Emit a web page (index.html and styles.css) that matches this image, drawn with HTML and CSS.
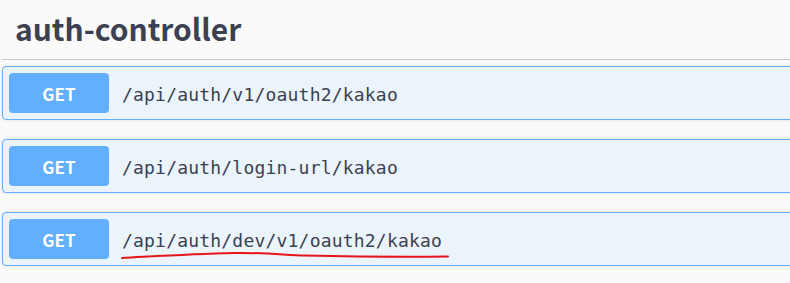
FILE: index.html
```html
<!DOCTYPE html>
<html lang="en">
<head>
    <meta charset="UTF-8">
    <title>Swagger UI</title>
    <link rel="stylesheet" href="styles.css">
</head>
<body>
    <div class="tag-section">
        <h3 class="opblock-tag">auth-controller</h3>

        <div class="opblock">
            <span class="method">GET</span>
            <span class="path">/api/auth/v1/oauth2/kakao</span>
        </div>

        <div class="opblock">
            <span class="method">GET</span>
            <span class="path">/api/auth/login-url/kakao</span>
        </div>

        <div class="opblock">
            <span class="method">GET</span>
            <span class="path">/api/auth/dev/v1/oauth2/kakao</span>
        </div>
    </div>

    <!-- hand-drawn red underline -->
    <svg class="scribble" width="790" height="283" viewBox="0 0 790 283">
        <path d="M122 258 C160 256 190 254 235 253 C265 252.5 285 255 305 255.5 C350 256.5 400 257 448 256.5"
              fill="none" stroke="#e8141b" stroke-width="2" stroke-linecap="round"/>
    </svg>
</body>
</html>
```

FILE: styles.css
```css
body {
    margin: 0;
    background-color: #fafafa;
    color: #3b4151;
    overflow: hidden;
    position: relative;
    height: 283px;
}

.tag-section {
    padding-left: 2px;
    margin-right: -20px;
}

.opblock-tag {
    margin: 0;
    padding: 7px 0 10px 13px;
    font-family: "Noto Sans CJK KR", "Noto Sans", sans-serif;
    font-weight: 700;
    font-size: 30px;
    line-height: 42px;
    border-bottom: 1px solid #c8c9cc;
    margin-bottom: 6px;
}

.opblock {
    display: flex;
    align-items: center;
    gap: 13px;
    padding: 6px;
    margin-bottom: 19px;
    border: 1px solid #61affe;
    border-radius: 4px;
    background-color: #ebf3fb;
    box-shadow: 0 0 3px rgba(0, 0, 0, 0.12);
}

.method {
    width: 100px;
    height: 40px;
    border-radius: 4px;
    background-color: #61affe;
    color: #fff;
    font-family: "Noto Sans CJK KR", "Noto Sans", sans-serif;
    font-weight: 700;
    font-size: 17px;
    display: flex;
    align-items: center;
    justify-content: center;
}

.path {
    font-family: "DejaVu Sans Mono", monospace;
    font-size: 18px;
    letter-spacing: 0.2px;
    color: #3b4151;
    padding-top: 3px;
}

.scribble {
    position: absolute;
    left: 0;
    top: 0;
    pointer-events: none;
}
```
